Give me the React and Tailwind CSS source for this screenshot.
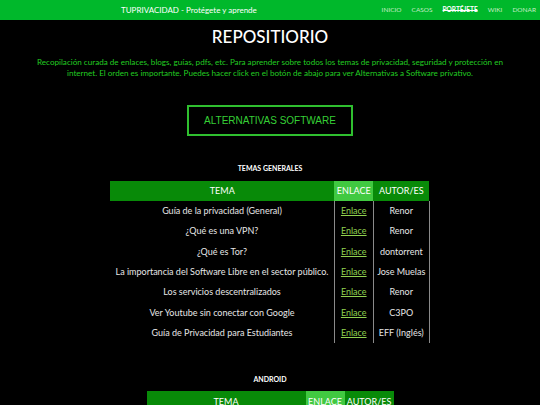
const general = [
  ["Guía de la privacidad (General)", "Renor"],
  ["¿Qué es una VPN?", "Renor"],
  ["¿Qué es Tor?", "dontorrent"],
  ["La importancia del Software Libre en el sector público.", "Jose Muelas"],
  ["Los servicios descentralizados", "Renor"],
  ["Ver Youtube sin conectar con Google", "C3PO"],
  ["Guía de Privacidad para Estudiantes", "EFF (Inglés)"],
];

const nav = ["INICIO", "CASOS", "PORTÉJETE", "WIKI", "DONAR"];

function Tabla({ rows, widths }) {
  return (
    <table className="mx-auto border-collapse table-fixed text-[9px] leading-none">
      <thead>
        <tr className="h-[20px] text-white">
          <th className="bg-[#088a08] font-normal" style={{ width: widths[0] }}>
            TEMA
          </th>
          <th className="bg-[#41c941] font-normal" style={{ width: widths[1] }}>
            ENLACE
          </th>
          <th className="bg-[#088a08] font-normal" style={{ width: widths[2] }}>
            AUTOR/ES
          </th>
        </tr>
      </thead>
      <tbody>
        {rows.map(([tema, autor]) => (
          <tr key={tema} className="h-[20.3px] text-[#e6e6e6]">
            <td className="text-center whitespace-nowrap">{tema}</td>
            <td className="border-x border-[#8a8a8a] text-center">
              <a href="#" className="text-[#8fd14f] underline">
                Enlace
              </a>
            </td>
            <td className="border-r border-[#8a8a8a] text-center whitespace-nowrap">
              {autor}
            </td>
          </tr>
        ))}
      </tbody>
    </table>
  );
}

export default function App() {
  return (
    <div className="min-h-[405px] bg-black font-['Lato',sans-serif]">
      <header className="flex h-[20px] items-center bg-[#00b82b] pl-[121px] pr-[4px]">
        <span className="text-[8px] text-white">
          TUPRIVACIDAD - Protégete y aprende
        </span>
        <nav className="ml-auto flex gap-[10px] text-[6.5px] text-[#c6ecc6]">
          {nav.map((n) => (
            <a
              key={n}
              href="#"
              className={n === "PORTÉJETE" ? "font-bold text-white line-through" : ""}
            >
              {n}
            </a>
          ))}
        </nav>
      </header>

      <h1 className="mt-[7px] text-center text-[17px] font-medium leading-[20px] text-white">
        REPOSITIORIO
      </h1>

      <p className="mx-auto mt-[10px] max-w-[482px] text-center text-[8.1px] leading-[10.5px] text-[#22cc22]">
        Recopilación curada de enlaces, blogs, guías, pdfs, etc. Para aprender sobre todos los
        temas de privacidad, seguridad y protección en internet. El orden es importante. Puedes
        hacer click en el botón de abajo para ver Alternativas a Software privativo.
      </p>

      <div className="mt-[27px] flex justify-center">
        <button className="h-[31px] w-[166px] border-2 border-[#2fbf2f] font-['Liberation_Sans',sans-serif] text-[10px] text-[#36cf36]">
          ALTERNATIVAS SOFTWARE
        </button>
      </div>

      <h2 className="mt-[27px] mb-[7px] text-center text-[7px] font-bold text-white">
        TEMAS GENERALES
      </h2>
      <Tabla rows={general} widths={[224, 39, 56]} />

      <h2 className="mt-[31px] mb-[7px] text-center text-[7px] font-bold text-white">
        ANDROID
      </h2>
      <Tabla rows={[]} widths={[159, 39, 49]} />
    </div>
  );
}
